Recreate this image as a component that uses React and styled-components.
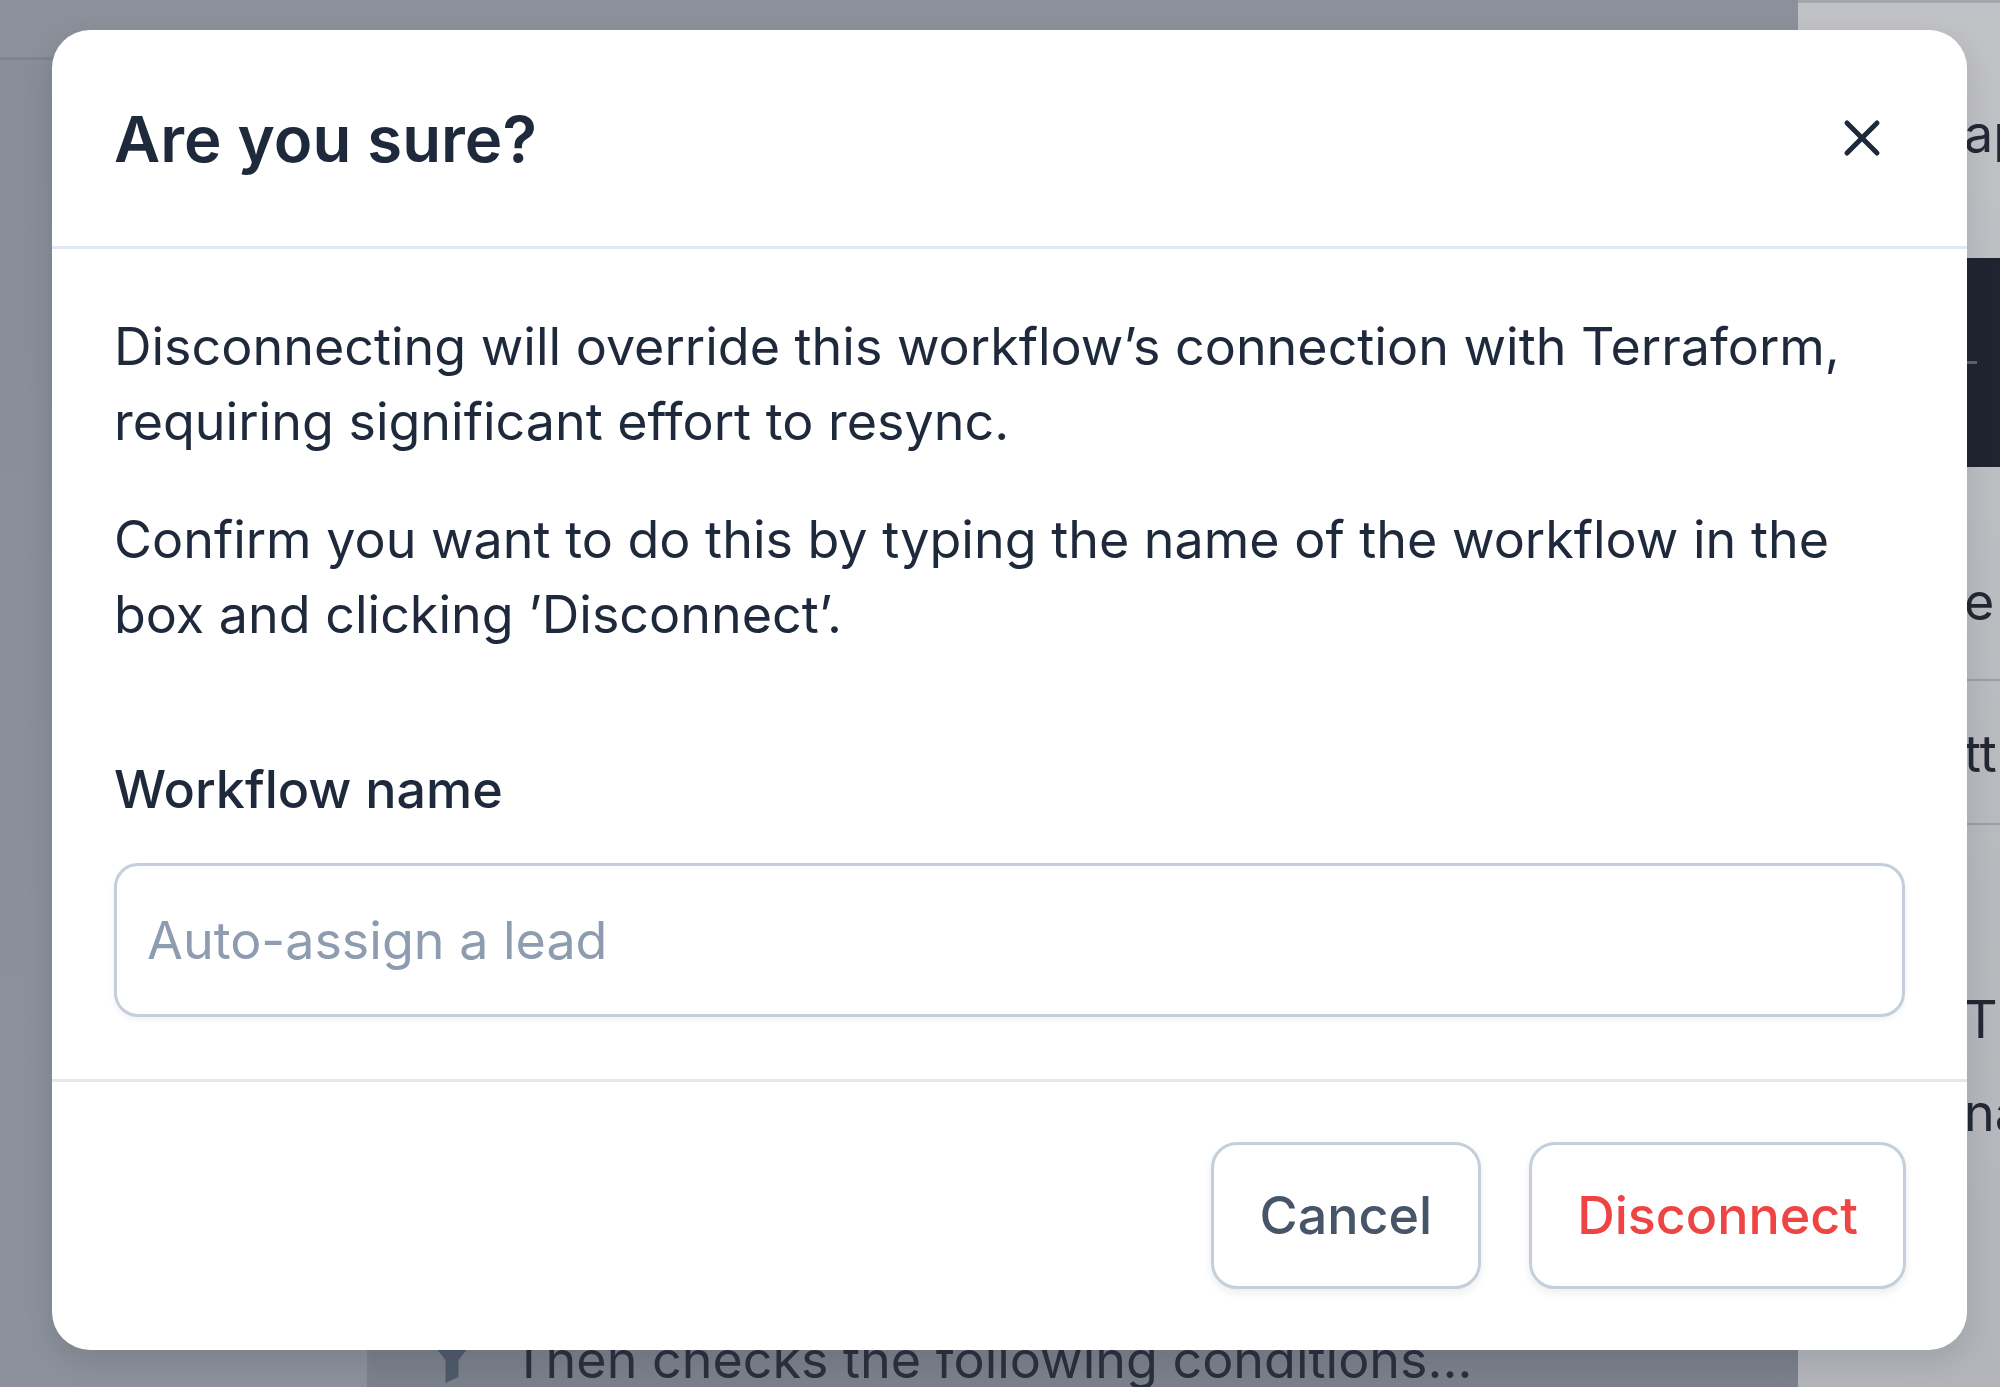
import React from 'react';
import styled, { createGlobalStyle } from 'styled-components';

const GlobalStyle = createGlobalStyle`
  html, body {
    margin: 0;
    padding: 0;
    height: 100%;
    overflow: hidden;
  }
  body {
    font-family: Inter, "Noto Sans", "Liberation Sans", sans-serif;
    color: #1e293b;
  }
`;

const Page = styled.div`
  display: flex;
  height: 1387px;
  overflow: hidden;
`;

const Workspace = styled.div`
  flex: 1;
  display: flex;
  flex-direction: column;
`;

const TopBar = styled.div`
  height: 57px;
  flex-shrink: 0;
  background: #8b909a;
  border-bottom: 3px solid #7f848e;
`;

const Columns = styled.div`
  flex: 1;
  display: flex;
  min-height: 0;
`;

const Sidebar = styled.div`
  width: 367px;
  flex-shrink: 0;
  background: linear-gradient(180deg, #888d97 0%, #8c919b 100%);
  border-right: 3px solid #7d828c;
`;

const Main = styled.div`
  flex: 1;
  background: linear-gradient(180deg, #858a94 0%, #7b808a 100%);
  display: flex;
  flex-direction: column;
  justify-content: flex-end;
`;

const StepRow = styled.div`
  display: flex;
  align-items: flex-start;
  gap: 40px;
  height: 75px;
  padding-left: 62px;
  margin-bottom: -10px;
  font-size: 52px;
  line-height: 75px;
  color: #2a303c;
  white-space: nowrap;

  svg {
    margin-top: 1px;
    flex-shrink: 0;
  }
`;

const RightPanel = styled.div`
  width: 202px;
  flex-shrink: 0;
  background: linear-gradient(180deg, #c1c2c6 0%, #b3b5ba 100%);
  border-top: 3px solid #a3a6ac;
  display: flex;
  flex-direction: column;
  overflow: hidden;
`;

const PeekText = styled.div`
  font-size: 52px;
  line-height: 75px;
  color: #232834;
  padding-left: 166px;
  margin-top: ${p => p.gap}px;
  white-space: nowrap;
`;

const CodeBlock = styled.div`
  margin-top: 87px;
  height: 209px;
  margin-left: 40px;
  background: #1f2430;
  display: flex;
  align-items: center;
  padding-left: 129px;
`;

const Dash = styled.div`
  width: 10px;
  height: 3px;
  background: #5d6472;
`;

const PanelRule = styled.div`
  height: 2px;
  margin-top: ${p => p.gap}px;
  background: #9a9ea6;
`;

const Overlay = styled.div`
  position: fixed;
  inset: 0;
  padding: 30px 0 0 52px;
`;

const Modal = styled.div`
  width: 1915px;
  background: #ffffff;
  border-radius: 38px;
  box-shadow: 0 12px 30px rgba(15, 23, 42, 0.12);
  overflow: hidden;
`;

const Header = styled.div`
  height: 216px;
  display: flex;
  align-items: center;
  justify-content: space-between;
  padding: 0 71px 0 62px;
  border-bottom: 3px solid #e2e8f0;
`;

const Title = styled.h2`
  margin: 0;
  font-size: 63.5px;
  font-weight: 600;
  color: #1e293b;
`;

const CloseButton = styled.button`
  width: 68px;
  height: 68px;
  border: none;
  background: none;
  padding: 0;
  display: flex;
  align-items: center;
  justify-content: center;
  color: #1e293b;
  cursor: pointer;
`;

const Body = styled.div`
  padding: 60px 62px 62px;
`;

const Paragraph = styled.p`
  margin: 0 0 ${p => p.gap || 0}px;
  font-size: 52px;
  line-height: 75px;
  color: #1e293b;
`;

const Label = styled.label`
  display: block;
  margin-top: 100px;
  margin-bottom: 36px;
  font-size: 52px;
  line-height: 75px;
  font-weight: 500;
  color: #1e293b;
`;

const Input = styled.input`
  display: block;
  width: 100%;
  height: 154px;
  box-sizing: border-box;
  border: 3px solid #c5cfdb;
  border-radius: 24px;
  padding: 0 30px;
  font-family: inherit;
  font-size: 52px;
  color: #1e293b;
  box-shadow: 0 3px 6px rgba(15, 23, 42, 0.05);
  outline: none;

  &::placeholder {
    color: #8e9cb0;
  }
`;

const Footer = styled.div`
  border-top: 3px solid #e2e8f0;
  padding: 60px 61px 61px;
  display: flex;
  justify-content: flex-end;
  gap: 48px;
`;

const Button = styled.button`
  height: 147px;
  padding: 0 ${p => p.pad}px;
  border: 3px solid #c5cfdb;
  border-radius: 26px;
  background: #ffffff;
  font-family: inherit;
  font-size: 52px;
  font-weight: 500;
  color: ${p => (p.danger ? '#ef4444' : '#475569')};
  box-shadow: 0 4px 8px rgba(15, 23, 42, 0.08);
  cursor: pointer;
`;

const XIcon = () => (
  <svg width="60" height="60" viewBox="0 0 24 24" fill="none" stroke="currentColor" strokeWidth="2" strokeLinecap="round" strokeLinejoin="round">
    <path d="M18 6 6 18" />
    <path d="m6 6 12 12" />
  </svg>
);

const FunnelIcon = () => (
  <svg width="40" height="60" viewBox="0 0 40 60" fill="#4f5a6b">
    <path d="M3 0H37a3 3 0 0 1 3 3V20L26.5 37V54L13.5 60V37L0 20V3a3 3 0 0 1 3-3Z" />
  </svg>
);

export default function App() {
  return (
    <>
      <GlobalStyle />
      <Page>
        <Workspace>
          <TopBar />
          <Columns>
            <Sidebar />
            <Main>
              <StepRow>
                <FunnelIcon />
                <span>Then checks the following conditions...</span>
              </StepRow>
            </Main>
          </Columns>
        </Workspace>
        <RightPanel>
          <PeekText gap={93}>ap</PeekText>
          <CodeBlock>
            <Dash />
          </CodeBlock>
          <PeekText gap={97}>e</PeekText>
          <PanelRule gap={40} />
          <PeekText gap={35}>ttp</PeekText>
          <PanelRule gap={32} />
          <PeekText gap={157}>Th</PeekText>
          <PeekText gap={18}>na</PeekText>
        </RightPanel>
      </Page>

      <Overlay>
        <Modal>
          <Header>
            <Title>Are you sure?</Title>
            <CloseButton aria-label="Close">
              <XIcon />
            </CloseButton>
          </Header>
          <Body>
            <Paragraph gap={43}>
              Disconnecting will override this workflow’s connection with Terraform, requiring significant effort to resync.
            </Paragraph>
            <Paragraph>
              Confirm you want to do this by typing the name of the workflow in the box and clicking ’Disconnect’.
            </Paragraph>
            <Label htmlFor="workflow-name">Workflow name</Label>
            <Input id="workflow-name" placeholder="Auto-assign a lead" />
          </Body>
          <Footer>
            <Button pad={46}>Cancel</Button>
            <Button pad={45} danger>Disconnect</Button>
          </Footer>
        </Modal>
      </Overlay>
    </>
  );
}
